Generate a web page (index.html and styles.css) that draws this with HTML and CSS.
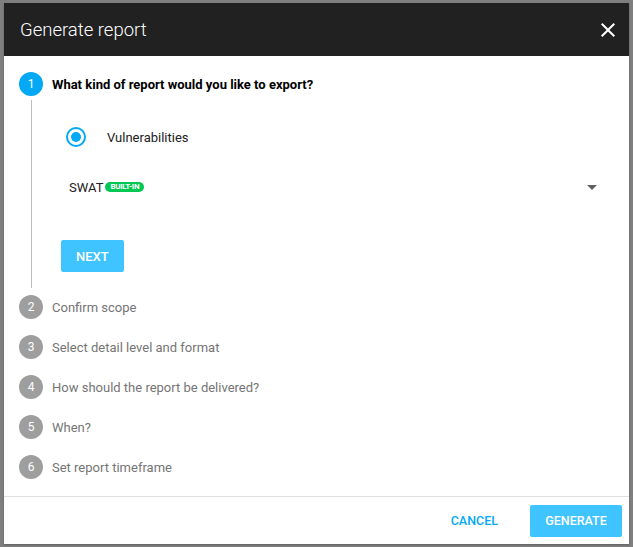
FILE: index.html
```html
<!DOCTYPE html>
<html lang="en">
<head>
<meta charset="utf-8">
<title>Generate report</title>
<link rel="stylesheet" href="styles.css">
</head>
<body>
<div class="dialog">
  <header class="dialog-header">
    <h1 class="dialog-title">Generate report</h1>
    <button class="close-btn" aria-label="Close">
      <svg viewBox="0 0 24 24" width="24" height="24"><path d="M19 6.41L17.59 5 12 10.59 6.41 5 5 6.41 10.59 12 5 17.59 6.41 19 12 13.41 17.59 19 19 17.59 13.41 12z" fill="#fff"/></svg>
    </button>
  </header>
  <main class="dialog-body">
    <div class="step step-active">
      <div class="step-head">
        <span class="step-num active">1</span>
        <span class="step-label active">What kind of report would you like to export?</span>
      </div>
      <div class="step-content">
        <label class="radio-row">
          <span class="radio"><span class="radio-dot"></span></span>
          <span class="radio-text">Vulnerabilities</span>
        </label>
        <div class="select-row">
          <span class="select-value">SWAT<span class="badge">BUILT-IN</span></span>
          <svg class="select-arrow" viewBox="0 0 10 5" width="10" height="5"><path d="M0 0h10L5 5z" fill="#616161"/></svg>
        </div>
        <div class="next-row">
          <button class="btn-raised">NEXT</button>
        </div>
      </div>
    </div>
    <div class="step"><div class="step-head"><span class="step-num">2</span><span class="step-label">Confirm scope</span></div></div>
    <div class="step"><div class="step-head"><span class="step-num">3</span><span class="step-label">Select detail level and format</span></div></div>
    <div class="step"><div class="step-head"><span class="step-num">4</span><span class="step-label">How should the report be delivered?</span></div></div>
    <div class="step"><div class="step-head"><span class="step-num">5</span><span class="step-label">When?</span></div></div>
    <div class="step"><div class="step-head"><span class="step-num">6</span><span class="step-label">Set report timeframe</span></div></div>
  </main>
  <footer class="dialog-footer">
    <button class="btn-flat">CANCEL</button>
    <button class="btn-raised btn-generate">GENERATE</button>
  </footer>
</div>
</body>
</html>
```

FILE: styles.css
```css
* { box-sizing: border-box; }
html, body { margin: 0; padding: 0; }
body {
  background: #7f7f7f;
  font-family: Roboto, "Liberation Sans", sans-serif;
  width: 633px;
  height: 547px;
  overflow: hidden;
}
.dialog {
  margin: 3px 0 0 4px;
  width: 625px;
  height: 541px;
  background: #fff;
  display: flex;
  flex-direction: column;
  box-shadow: 0 1px 2px rgba(0,0,0,0.25);
}
.dialog-header {
  height: 53px;
  background: #212121;
  display: flex;
  align-items: center;
  justify-content: space-between;
  padding: 0 9px 0 16px;
  flex-shrink: 0;
}
.dialog-title {
  margin: 0;
  color: #fff;
  font-size: 18.5px;
  font-weight: 300;
}
.close-btn {
  background: none;
  border: 0;
  padding: 0;
  width: 24px;
  height: 24px;
  display: flex;
  cursor: pointer;
}
.dialog-body {
  flex: 1;
  padding: 16px 0 0 15px;
}
.step-head {
  display: flex;
  align-items: center;
  height: 24px;
}
.step { margin-bottom: 16px; }
.step-active { margin-bottom: 7px; }
.step-num {
  width: 24px;
  height: 24px;
  border-radius: 50%;
  background: #9e9e9e;
  color: #fff;
  font-size: 12px;
  display: flex;
  align-items: center;
  justify-content: center;
  flex-shrink: 0;
  margin-right: 9px;
}
.step-num.active { background: #03a9f4; }
.step-label {
  font-size: 13px;
  color: #757575;
}
.step-label.active {
  color: #000;
  font-weight: 700;
}
.step-content {
  margin: 4px 0 0 12px;
  border-left: 1px solid #bdbdbd;
  height: 188px;
  padding: 27px 0 0 0;
}
.radio-row {
  display: flex;
  align-items: center;
  margin-left: 34px;
  height: 20px;
}
.radio {
  width: 20px;
  height: 20px;
  border: 2px solid #03a9f4;
  border-radius: 50%;
  display: flex;
  align-items: center;
  justify-content: center;
}
.radio-dot {
  width: 10px;
  height: 10px;
  border-radius: 50%;
  background: #03a9f4;
}
.radio-text {
  margin-left: 21px;
  font-size: 13px;
  color: #212121;
}
.select-row {
  display: flex;
  align-items: center;
  justify-content: space-between;
  margin: 30px 32px 0 37px;
  height: 20px;
}
.select-value {
  font-size: 13px;
  color: #212121;
  display: flex;
  align-items: center;
}
.badge {
  margin-left: 2px;
  background: #00c853;
  color: #fff;
  font-size: 8px;
  font-weight: 700;
  height: 10px;
  line-height: 10px;
  padding: 0 5px;
  border-radius: 5px;
  letter-spacing: -0.3px;
}
.next-row {
  margin: 43px 0 0 29px;
}
.btn-raised {
  background: #40c4ff;
  color: #fff;
  border: 0;
  border-radius: 2px;
  height: 32px;
  padding: 0 15px;
  font-family: inherit;
  font-size: 13px;
  font-weight: 500;
}
.dialog-footer {
  height: 48px;
  border-top: 1px solid #e0e0e0;
  display: flex;
  align-items: center;
  justify-content: flex-end;
  padding: 0 7px 0 0;
  flex-shrink: 0;
}
.btn-flat {
  background: none;
  border: 0;
  color: #03a9f4;
  font-family: inherit;
  font-size: 12.5px;
  font-weight: 500;
  height: 32px;
  padding: 0 16px;
  margin-right: 16px;
}
.btn-generate {
  width: 92px;
  padding: 0;
  font-size: 12.5px;
}
```
